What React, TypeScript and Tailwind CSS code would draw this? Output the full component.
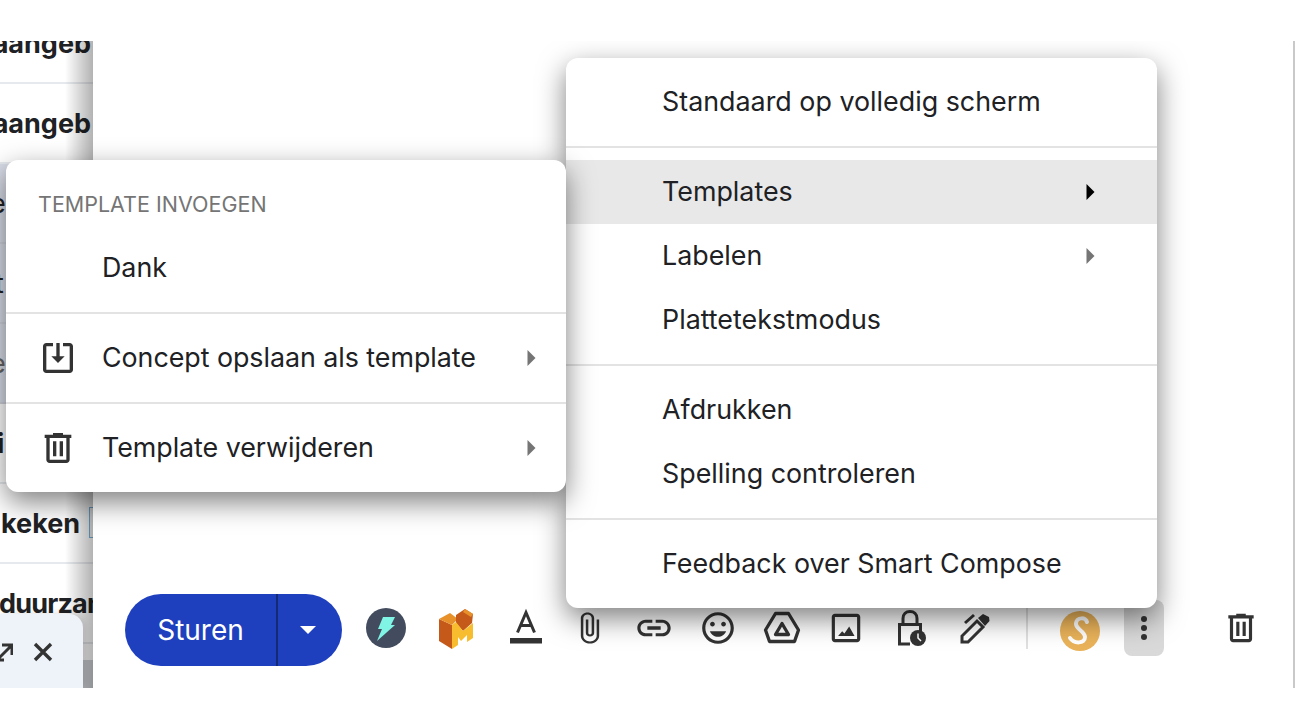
import React from 'react';

const Caret = ({ className }: { className: string }) => (
  <svg width="9" height="16" viewBox="0 0 9 16" className={`shrink-0 ${className}`}>
    <path d="M0.5 0 L8.5 8 L0.5 16 Z" fill="currentColor" />
  </svg>
);

const Icon = ({ d, size = 38 }: { d: string; size?: number }) => (
  <svg width={size} height={size} viewBox="0 0 24 24" fill="#333" className="shrink-0">
    <path d={d} />
  </svg>
);

const TRASH = 'M15 4V3H9v1H4v2h1v13c0 1.1.9 2 2 2h10c1.1 0 2-.9 2-2V6h1V4h-5zm2 15H7V6h10v13zM9 8h2v9H9zm4 0h2v9h-2z';
const SAVE = 'M19 3h-4v2h4v14H5V5h4V3H5c-1.1 0-2 .9-2 2v14c0 1.1.9 2 2 2h14c1.1 0 2-.9 2-2V5c0-1.1-.9-2-2-2zM13 3h-2v8H8l4 4 4-4h-3z';
const LINK = 'M3.9 12c0-1.71 1.39-3.1 3.1-3.1h4V7H7c-2.76 0-5 2.24-5 5s2.24 5 5 5h4v-1.9H7c-1.71 0-3.1-1.39-3.1-3.1zM8 13h8v-2H8v2zm9-6h-4v1.9h4c1.71 0 3.1 1.39 3.1 3.1s-1.39 3.1-3.1 3.1h-4V17h4c2.76 0 5-2.24 5-5s-2.24-5-5-5z';
const EMOJI = 'M11.99 2C6.47 2 2 6.48 2 12s4.47 10 9.99 10C17.52 22 22 17.52 22 12S17.52 2 11.99 2zM12 20c-4.42 0-8-3.58-8-8s3.58-8 8-8 8 3.58 8 8-3.58 8-8 8zm3.5-9c.83 0 1.5-.67 1.5-1.5S16.33 8 15.5 8 14 8.67 14 9.5s.67 1.5 1.5 1.5zm-7 0c.83 0 1.5-.67 1.5-1.5S9.33 8 8.5 8 7 8.67 7 9.5 7.67 11 8.5 11zm3.5 6.5c2.33 0 4.31-1.46 5.11-3.5H6.89c.8 2.04 2.78 3.5 5.11 3.5z';
const IMAGE = 'M19 5v14H5V5h14m0-2H5c-1.1 0-2 .9-2 2v14c0 1.1.9 2 2 2h14c1.1 0 2-.9 2-2V5c0-1.1-.9-2-2-2zM7 17l2.6-3 1.4 1.4 3-4.4 3.4 6z';
const CLIP = 'M16.5 6v11.5c0 2.21-1.79 4-4 4s-4-1.79-4-4V5c0-1.38 1.12-2.5 2.5-2.5s2.5 1.12 2.5 2.5v10.5c0 .55-.45 1-1 1s-1-.45-1-1V6H10v9.5c0 1.38 1.12 2.5 2.5 2.5s2.5-1.12 2.5-2.5V5c0-2.21-1.79-4-4-4S7 2.79 7 5v12.5c0 3.04 2.46 5.5 5.5 5.5s5.5-2.46 5.5-5.5V6h-1.5z';

const Cell = ({ className = 'ml-6', children }: { className?: string; children: React.ReactNode }) => (
  <div className={`mt-[14px] flex h-10 w-10 shrink-0 items-center justify-center ${className}`}>{children}</div>
);

const Sep = () => <div className="my-3 h-0.5 bg-[#e3e3e3]" />;

const MainItem = ({ label, active, arrow }: { label: string; active?: boolean; arrow?: string }) => (
  <div className={`flex h-16 items-center pl-24 pr-[62px] text-[26.85px] text-[#202124] ${active ? 'bg-[#e8e8e8]' : ''}`}>
    <span className="mb-0.5 flex-1 whitespace-nowrap">{label}</span>
    {arrow && <Caret className={arrow} />}
  </div>
);

const SubItem = ({ label, d }: { label: string; d: string }) => (
  <div className="flex h-16 items-center pl-8 pr-[30px] text-[26.85px] text-[#202124]">
    <Icon d={d} size={40} />
    <span className="mb-0.5 ml-6 flex-1 whitespace-nowrap tracking-[-0.05px]">{label}</span>
    <Caret className="text-[#757575]" />
  </div>
);

export default function App() {
  return (
    <div className='h-[728px] w-[1295px] overflow-hidden bg-white pt-[41px] font-["Inter",sans-serif]'>
      <div className="relative flex h-[647px] overflow-hidden">
        {/* message list behind the compose window */}
        <div className="relative w-[93px] shrink-0 overflow-hidden">
          <div className="-mt-[37px] text-[27px] text-[#202124]">
            <div className="flex h-20 items-center justify-end border-b-2 border-[#e6e9ed] pr-0.5 pt-0.5 font-bold"><span>aangeb</span></div>
            <div className="flex h-20 items-center justify-end border-b-2 border-[#e6e9ed] pr-0.5 pt-0.5 font-bold"><span>aangeb</span></div>
            <div className="flex h-20 items-center border-b-2 border-[#cfd3db] bg-[#d9dde8] pt-0.5"><span className="-ml-[10px]">e</span></div>
            <div className="flex h-20 items-center border-b-2 border-[#cfd3db] bg-[#d9dde8] pt-0.5"><span className="-ml-[5px]">t</span></div>
            <div className="flex h-20 items-center border-b-2 border-[#cfd3db] bg-[#d9dde8] pt-0.5 text-[#666]"><span className="-ml-[10px]">e</span></div>
            <div className="flex h-20 items-center border-b-2 border-[#e6e9ed] pt-0.5 font-bold"><span className="-ml-[3px]">i</span></div>
            <div className="flex h-20 items-center border-b-2 border-[#e6e9ed] font-bold">
              <span className="ml-px mt-0.5 whitespace-nowrap">keken</span>
              <div className="ml-[9px] h-[31px] w-10 shrink-0 -translate-y-px border border-[#7ab4e0] bg-[#f4f6f8]" />
            </div>
            <div className="flex h-20 items-center border-b-2 border-[#e6e9ed] pt-0.5 font-bold"><span className="-ml-px whitespace-nowrap tracking-[-0.8px]">duurzam</span></div>
            <div className="mt-4 h-7 bg-[#d0d3d8]" />
          </div>
          <div className="absolute inset-y-0 right-0 w-7 bg-gradient-to-r from-black/0 to-black/30" />
          {/* minimized draft */}
          <div className="absolute bottom-0 left-0 flex h-[74px] w-[83px] items-start rounded-tr-[14px] bg-[#eef3fa] pt-[26px] shadow-[2px_0_8px_rgba(0,0,0,0.15)]">
            <svg width="18" height="24" viewBox="0 0 18 24" className="-ml-[5px] shrink-0" fill="none" stroke="#333" strokeWidth="3">
              <path d="M7 5h10v10M16.5 5.5L3 19M0 20h9" />
            </svg>
            <svg width="24" height="24" viewBox="0 0 24 24" className="ml-[18px] shrink-0" fill="none" stroke="#333" strokeWidth="3.4">
              <path d="M4 4l16 16M20 4L4 20" />
            </svg>
          </div>
        </div>

        {/* compose window */}
        <div className="flex flex-1 flex-col justify-end border-r-2 border-[#c9c9c9]">
          <div className="flex h-[94px] items-start pl-8">
            <div className="flex h-[72px] w-[217px] shrink-0 overflow-hidden rounded-full bg-[#1e3fbe] text-white">
              <div className="flex w-[153px] items-center justify-center border-r-2 border-[#152a75] text-[28px]">Sturen</div>
              <div className="flex flex-1 items-center justify-center pr-1">
                <svg width="16" height="8" viewBox="0 0 16 8"><path d="M0 0h16L8 8z" fill="#fff" /></svg>
              </div>
            </div>

            <Cell>
              <svg width="40" height="40" viewBox="0 0 40 40">
                <circle cx="20" cy="20" r="20" fill="#434c5e" />
                <path d="M17 9h12l-4 8h4L11 33l5-12h-4z" fill="#80f5e6" />
              </svg>
            </Cell>
            <Cell className="ml-[30px]">
              <svg width="40" height="42" viewBox="0 0 40 42">
                <path d="M3 12l13 6v24L3 34z" fill="#c5591a" />
                <path d="M3 12l11-6 8 6-6 6z" fill="#e8902a" />
                <path d="M20 8l9-6 8 5-1 9-9 8-7-8z" fill="#c5591a" />
                <path d="M29 2l8 5-2 3-8-5z" fill="#e8902a" />
                <path d="M16 18l4-3 7 9 10-8v15l-6 4v-7l-6 6-3-4v8l-6 4z" fill="#f7bd2e" />
              </svg>
            </Cell>
            <Cell className="ml-[30px]">
              <svg width="40" height="40" viewBox="0 0 40 40">
                <path d="M11.500 24.500L20 4.500l8.500 20M14 17.500h12" fill="none" stroke="#333" strokeWidth="3" />
                <rect x="4" y="30" width="32" height="5.500" fill="#333" />
              </svg>
            </Cell>
            <Cell>
              <svg width="40" height="34" viewBox="0.5 0 24 24" preserveAspectRatio="none" fill="#333"><path d={CLIP} /></svg>
            </Cell>
            <Cell><Icon d={LINK} size={40} /></Cell>
            <Cell><Icon d={EMOJI} /></Cell>
            <Cell>
              <svg width="40" height="40" viewBox="0 0 40 40" fill="none" stroke="#333" strokeWidth="3.300" strokeLinejoin="round">
                <path d="M13.500 5.500h13L36.500 22l-4 11.500h-25L3.500 22z" />
                <path d="M20 15.500l6.500 11h-13z" />
              </svg>
            </Cell>
            <Cell><Icon d={IMAGE} /></Cell>
            <Cell>
              <svg width="40" height="40" viewBox="0 0 40 40" fill="none" stroke="#333" strokeWidth="3">
                <path d="M13 15v-4.500C13 6 16 3.500 20 3.500s7 2.500 7 7V15" />
                <path d="M20 36H9.500V16.500h21V24" />
                <circle cx="28" cy="30" r="8" fill="#333" stroke="none" />
                <path d="M28 25.500V30l3 3" stroke="#fff" strokeWidth="1.500" />
              </svg>
            </Cell>
            <Cell>
              <svg width="40" height="40" viewBox="0 0 40 40">
                <path d="M8 34l0-6L23 13l6 6-15 15z" fill="none" stroke="#333" strokeWidth="3" />
                <path d="M24 10l5-4 6 3 .5 4-4.500 5z" fill="#333" />
                <path d="M11 15l9-8" fill="none" stroke="#333" strokeWidth="3" />
              </svg>
            </Cell>
            <div className="ml-8 mt-[14px] h-[41px] w-0.5 shrink-0 bg-[#e0e0e0]" />
            <div className="ml-8 mt-[17px] flex h-10 w-10 shrink-0 items-center justify-center rounded-full bg-[#eab35a]">
              <svg width="40" height="40" viewBox="0 0 40 40" fill="none" stroke="#fff" strokeWidth="4" strokeLinecap="round">
                <path d="M27 11C26 6 17 6 16 12c-1 6 9 8 9 14 0 7-11 7-15 1" />
              </svg>
            </div>
            <div className="ml-6 mt-1.5 flex h-14 w-10 shrink-0 flex-col items-center justify-center gap-[3px] rounded-lg bg-[#d9d9d9]">
              <span className="h-1.5 w-1.5 rounded-full bg-[#333]" />
              <span className="h-1.5 w-1.5 rounded-full bg-[#333]" />
              <span className="h-1.5 w-1.5 rounded-full bg-[#333]" />
            </div>
            <Cell className="ml-[57px]"><Icon d={TRASH} /></Cell>
          </div>
        </div>

        {/* more options menu */}
        <div className="absolute left-[566px] top-[17px] z-10 w-[591px] rounded-xl bg-white py-3 shadow-[0_10px_28px_rgba(0,0,0,0.5)]">
          <MainItem label="Standaard op volledig scherm" />
          <Sep />
          <MainItem label="Templates" active arrow="text-black" />
          <MainItem label="Labelen" arrow="text-[#757575]" />
          <MainItem label="Plattetekstmodus" />
          <Sep />
          <MainItem label="Afdrukken" />
          <MainItem label="Spelling controleren" />
          <Sep />
          <MainItem label="Feedback over Smart Compose" />
        </div>

        {/* templates submenu */}
        <div className="absolute left-1.5 top-[119px] z-20 w-[560px] rounded-xl bg-white py-3 text-[#202124] shadow-[0_10px_28px_rgba(0,0,0,0.5)]">
          <div className="flex h-16 items-center pl-8 text-[21.5px] text-[#757575]">TEMPLATE INVOEGEN</div>
          <div className="flex h-16 items-center pb-0.5 pl-24 text-[26.85px]">Dank</div>
          <Sep />
          <SubItem label="Concept opslaan als template" d={SAVE} />
          <Sep />
          <SubItem label="Template verwijderen" d={TRASH} />
        </div>
      </div>
    </div>
  );
}
